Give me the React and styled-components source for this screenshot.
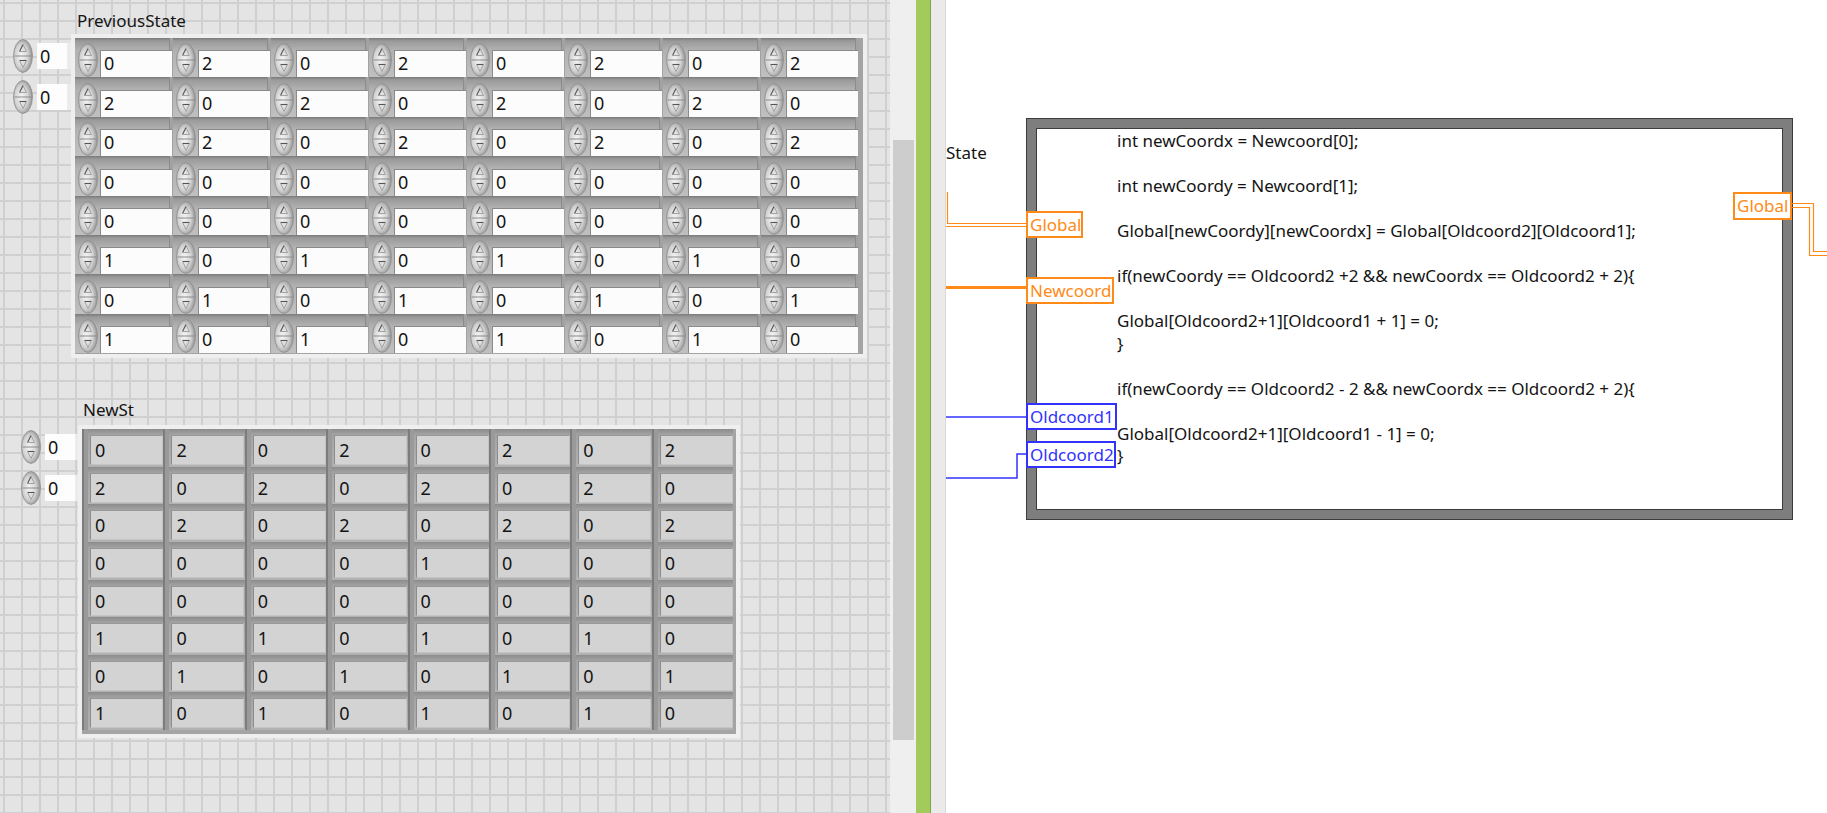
import React from 'react';
import styled, { createGlobalStyle } from 'styled-components';

const ORANGE = '#ff8a17';
const BLUE = '#3232ff';

const prevState = [
  [0, 2, 0, 2, 0, 2, 0, 2],
  [2, 0, 2, 0, 2, 0, 2, 0],
  [0, 2, 0, 2, 0, 2, 0, 2],
  [0, 0, 0, 0, 0, 0, 0, 0],
  [0, 0, 0, 0, 0, 0, 0, 0],
  [1, 0, 1, 0, 1, 0, 1, 0],
  [0, 1, 0, 1, 0, 1, 0, 1],
  [1, 0, 1, 0, 1, 0, 1, 0]
];

const newState = [
  [0, 2, 0, 2, 0, 2, 0, 2],
  [2, 0, 2, 0, 2, 0, 2, 0],
  [0, 2, 0, 2, 0, 2, 0, 2],
  [0, 0, 0, 0, 1, 0, 0, 0],
  [0, 0, 0, 0, 0, 0, 0, 0],
  [1, 0, 1, 0, 1, 0, 1, 0],
  [0, 1, 0, 1, 0, 1, 0, 1],
  [1, 0, 1, 0, 1, 0, 1, 0]
];

const codeLines = [
  'int newCoordx = Newcoord[0];',
  '',
  'int newCoordy = Newcoord[1];',
  '',
  'Global[newCoordy][newCoordx] = Global[Oldcoord2][Oldcoord1];',
  '',
  'if(newCoordy == Oldcoord2 +2 && newCoordx == Oldcoord2 + 2){',
  '',
  'Global[Oldcoord2+1][Oldcoord1 + 1] = 0;',
  '}',
  '',
  'if(newCoordy == Oldcoord2 - 2 && newCoordx == Oldcoord2 + 2){',
  '',
  'Global[Oldcoord2+1][Oldcoord1 - 1] = 0;',
  '}'
];

const tunnels = [
  { label: 'Global', x: 80, y: 211, w: 57, h: 27, color: ORANGE },
  { label: 'Newcoord', x: 80, y: 277, w: 88, h: 27, color: ORANGE },
  { label: 'Oldcoord1', x: 80, y: 403, w: 91, h: 27, color: BLUE },
  { label: 'Oldcoord2', x: 80, y: 441, w: 90, h: 27, color: BLUE },
  { label: 'Global', x: 787, y: 192, w: 59, h: 28, color: ORANGE }
];

const GlobalStyle = createGlobalStyle`
  html, body {
    margin: 0;
    padding: 0;
  }
  body {
    font-family: 'Noto Sans', 'Liberation Sans', sans-serif;
    background: #ffffff;
    overflow: hidden;
  }
`;

const Screen = styled.div`
  display: flex;
  width: 1827px;
  height: 813px;
  overflow: hidden;
`;

const FrontPanel = styled.div`
  width: 890px;
  height: 100%;
  flex-shrink: 0;
  background-color: #e4e4e4;
  background-image: linear-gradient(to right, #d0d0d0 2px, transparent 2px),
    linear-gradient(to bottom, #d0d0d0 2px, transparent 2px);
  background-size: 18px 18px;
  background-position: 3px 2px;
`;

const ArrayBlock = styled.div`
  margin-top: ${(p) => p.$top}px;
`;

const Label = styled.div`
  margin-left: ${(p) => p.$indent}px;
  font-size: 17px;
  line-height: 20px;
  color: #141414;
`;

const Body = styled.div`
  display: flex;
  align-items: flex-start;
  padding-left: ${(p) => p.$indexLeft}px;
  margin-top: ${(p) => p.$gapTop}px;
`;

const IndexCol = styled.div`
  display: flex;
  flex-direction: column;
  width: 61px;
  flex-shrink: 0;
`;

const IndexRow = styled.div`
  display: flex;
  align-items: center;
  height: 41px;
  gap: 4px;
`;

const IndexBox = styled.div`
  width: 37px;
  height: 26px;
  box-sizing: border-box;
  padding-left: 3px;
  background: #fdfdfd;
  border-right: 7px solid #ececec;
  font-size: 18px;
  line-height: 26px;
  color: #141414;
`;

const Frame = styled.div`
  display: grid;
  grid-template-columns: repeat(8, ${(p) => p.$colW}px);
  grid-auto-rows: ${(p) => p.$rowH}px;
  margin-left: ${(p) => p.$left}px;
  margin-top: 3px;
  padding: ${(p) => p.$pad};
  background: #a4a4a4;
  box-shadow: 0 0 0 4px #efefef;
`;

const PrevCell = styled.div`
  display: flex;
  align-items: flex-end;
  gap: 2px;
  padding: 5px 0 0 3px;
  box-sizing: border-box;
  background: linear-gradient(to bottom, #7a7a7a 0, #9a9a9a 3px, #b1b1b1 12px, #c0c0c0 100%);
  box-shadow: inset -3px 0 0 #a2a2a2, inset -4px 0 0 #8b8b8b;
`;

const EditBox = styled.div`
  width: 72px;
  height: 27px;
  box-sizing: border-box;
  padding-left: 3px;
  background: #fcfcfc;
  border-top: 1px solid #8a8a8a;
  border-left: 1px solid #8a8a8a;
  font-size: 18px;
  line-height: 25px;
  color: #141414;
`;

const NewCell = styled.div`
  display: flex;
  align-items: flex-end;
  justify-content: flex-end;
  padding: 6px 0.4px 1.6px 8px;
  box-sizing: border-box;
  background: linear-gradient(to bottom, #8c8c8c 0, #a4a4a4 6px, #b2b2b2 100%);
  box-shadow: inset 2px 0 0 #7c7c7c, inset 6px 0 0 #9a9a9a;
`;

const ShowBox = styled.div`
  width: 73px;
  height: 30px;
  box-sizing: border-box;
  padding-left: 4px;
  background: #d3d3d3;
  border-top: 1px solid #989898;
  border-left: 1px solid #8c8c8c;
  border-right: 1px solid #c4c4c4;
  border-bottom: 1px solid #c4c4c4;
  font-size: 18px;
  line-height: 28px;
  color: #141414;
`;

const ScrollTrack = styled.div`
  width: 26px;
  flex-shrink: 0;
  box-sizing: border-box;
  padding: 140px 2px 0 3px;
  background: #efefef;
`;

const ScrollThumb = styled.div`
  height: 600px;
  background: #cdcdcd;
`;

const SplitBar = styled.div`
  width: 15px;
  flex-shrink: 0;
  box-sizing: border-box;
  background: #a2cb5b;
  border-right: 1px solid #7ea646;
`;

const SplitEdge = styled.div`
  width: 15px;
  flex-shrink: 0;
  box-sizing: border-box;
  background: #eaeaea;
  border-right: 1px solid #d9d9d9;
`;

const Diagram = styled.div`
  position: relative;
  flex: 1;
  background: #ffffff;
`;

const StateLabel = styled.div`
  position: absolute;
  left: 0;
  top: 143px;
  font-size: 17px;
  line-height: 20px;
  color: #141414;
`;

const Wires = styled.svg`
  position: absolute;
  left: 0;
  top: 0;
  width: 100%;
  height: 100%;
  pointer-events: none;
`;

const FormulaNode = styled.div`
  position: absolute;
  left: 81px;
  top: 119px;
  width: 765px;
  height: 400px;
  box-sizing: border-box;
  border: 9px solid #7e7e7e;
  box-shadow: 0 0 0 1px #3c3c3c, inset 0 0 0 1px #3c3c3c;
  background: #ffffff;
`;

const Code = styled.div`
  padding: 2px 0 0 81px;
  font-size: 17px;
  line-height: 22.5px;
  color: #141414;
  white-space: pre;
`;

const Tunnel = styled.div`
  position: absolute;
  left: ${(p) => p.$x}px;
  top: ${(p) => p.$y}px;
  width: ${(p) => p.$w}px;
  height: ${(p) => p.$h}px;
  box-sizing: border-box;
  border: 2px solid ${(p) => p.$color};
  background: #ffffff;
  color: ${(p) => p.$color};
  font-size: 17px;
  line-height: ${(p) => p.$h - 4}px;
  padding-left: 2px;
  white-space: nowrap;
`;

const Spinner = () => (
  <svg width='20' height='34' viewBox='0 0 20 34'>
    <defs>
      <radialGradient id='spinFill' cx='42%' cy='50%' r='62%'>
        <stop offset='0' stopColor='#f6f6f6' />
        <stop offset='0.55' stopColor='#d4d4d4' />
        <stop offset='1' stopColor='#888888' />
      </radialGradient>
    </defs>
    <ellipse cx='10' cy='17' rx='9.4' ry='16.4' fill='url(#spinFill)' stroke='#8e8e8e' strokeWidth='0.9' />
    <line x1='1.5' y1='17' x2='18.5' y2='17' stroke='#8a8a8a' strokeWidth='1' />
    <path d='M6.5 12.5 L10 5.5' stroke='#555555' strokeWidth='1.1' fill='none' />
    <path d='M10 5.5 L13.5 12.5 L6.5 12.5' stroke='#a2a2a2' strokeWidth='1' fill='none' />
    <path d='M6.5 21.5 L13.5 21.5' stroke='#555555' strokeWidth='1.1' fill='none' />
    <path d='M6.5 21.5 L10 28.5 L13.5 21.5' stroke='#a2a2a2' strokeWidth='1' fill='none' />
  </svg>
);

const IndexControls = () => (
  <IndexCol>
    {[0, 1].map((i) => (
      <IndexRow key={i}>
        <Spinner />
        <IndexBox>0</IndexBox>
      </IndexRow>
    ))}
  </IndexCol>
);

const App = () => {
  return (
    <>
      <GlobalStyle />
      <Screen>
        <FrontPanel>
          <ArrayBlock $top={11}>
            <Label $indent={77}>PreviousState</Label>
            <Body $indexLeft={13} $gapTop={4}>
              <IndexControls />
              <Frame $colW={98} $rowH={39.4} $left={1} $pad='0 4px 1px 0'>
                {prevState.flat().map((v, i) => (
                  <PrevCell key={i}>
                    <Spinner />
                    <EditBox>{v}</EditBox>
                  </PrevCell>
                ))}
              </Frame>
            </Body>
          </ArrayBlock>

          <ArrayBlock $top={46}>
            <Label $indent={83}>NewSt</Label>
            <Body $indexLeft={21} $gapTop={6}>
              <IndexControls />
              <Frame $colW={81.4} $rowH={37.6} $left={0} $pad='0 3px 4px 0'>
                {newState.flat().map((v, i) => (
                  <NewCell key={i}>
                    <ShowBox>{v}</ShowBox>
                  </NewCell>
                ))}
              </Frame>
            </Body>
          </ArrayBlock>
        </FrontPanel>

        <ScrollTrack>
          <ScrollThumb />
        </ScrollTrack>
        <SplitBar />
        <SplitEdge />

        <Diagram>
          <StateLabel>State</StateLabel>
          <FormulaNode>
            <Code>
              {codeLines.map((line, i) => (
                <div key={i}>{line || ' '}</div>
              ))}
            </Code>
          </FormulaNode>
          <Wires>
            <line x1='1.5' y1='192' x2='1.5' y2='224' stroke={ORANGE} strokeWidth='1.2' />
            <line x1='1' y1='223.5' x2='80' y2='223.5' stroke={ORANGE} strokeWidth='1.2' />
            <line x1='0' y1='226.5' x2='80' y2='226.5' stroke={ORANGE} strokeWidth='1.2' />
            <rect x='0' y='286' width='80' height='3' fill={ORANGE} />
            <line x1='0' y1='417' x2='80' y2='417' stroke={BLUE} strokeWidth='1.5' />
            <polyline points='0,478 71,478 71,454 80,454' fill='none' stroke={BLUE} strokeWidth='1.5' />
            <polyline points='846,203.5 867.5,203.5 867.5,251.5 881,251.5' fill='none' stroke={ORANGE} strokeWidth='1.2' />
            <polyline points='846,207.5 863.5,207.5 863.5,255.5 881,255.5' fill='none' stroke={ORANGE} strokeWidth='1.2' />
          </Wires>
          {tunnels.map((t, i) => (
            <Tunnel key={i} $x={t.x} $y={t.y} $w={t.w} $h={t.h} $color={t.color}>
              {t.label}
            </Tunnel>
          ))}
        </Diagram>
      </Screen>
    </>
  );
};

export default App;
